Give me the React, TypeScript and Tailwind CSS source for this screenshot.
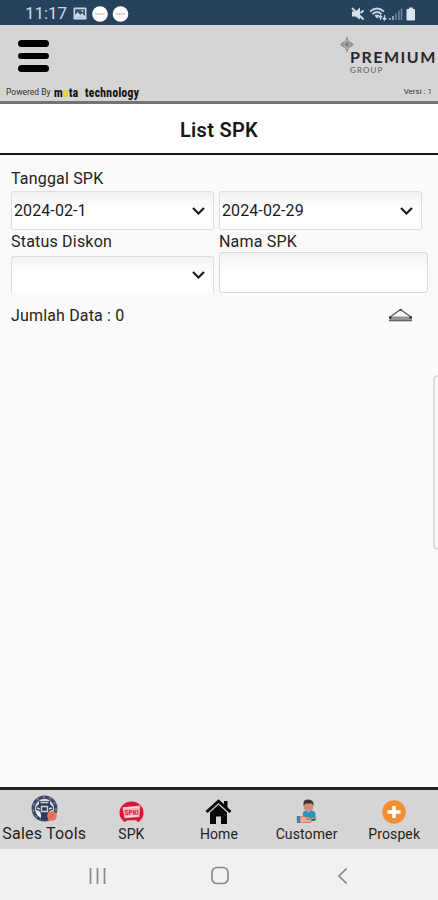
import React from "react";

function StatusBar() {
  return (
    <div className="flex h-[25px] shrink-0 items-center bg-[#26425d] pl-[25px] pr-[23px] pt-[2px] text-[#cfdce8]">
      <span className="w-[48px] text-[17px] leading-none tracking-[-0.1px]">11:17</span>
      <svg className="h-[13px] w-[14px]" viewBox="0 0 14 13">
        <rect x="0.5" y="0.5" width="13" height="12" rx="1.2" fill="#c9d8e5" />
        <rect x="2" y="2.2" width="10" height="8.2" fill="#3d5771" />
        <path d="M2 10.4V8l2.5-3 2.7 3L9 6.3l3 2.7v1.4z" fill="#c9d8e5" />
        <circle cx="9.5" cy="4" r="0.9" fill="#c9d8e5" />
      </svg>
      <svg className="ml-[5px] h-4 w-[37px]" viewBox="0 0 37 16">
        {[8, 28.5].map((cx) => (
          <g key={cx}>
            <circle cx={cx} cy="8" r="7.8" fill="#fff" />
            <path d={`M${cx - 5} 8h10`} stroke="#a8a8a8" strokeWidth="1.2" strokeDasharray="2 .5" />
          </g>
        ))}
      </svg>
      <svg className="ml-auto h-[14px] w-[64px]" viewBox="0 0 64 14">
        <path d="M1 4.500h3.500l4.500-4v12L4.500 9.500H1z" fill="#d3e0eb" />
        <path d="M1 1l11.500 11.500M9.500 6l3-2.500" stroke="#d3e0eb" strokeWidth="1.800" fill="none" />
        <path d="M19 4.500q7-6 14 0M21.500 7q4.500-4 9 0" fill="none" stroke="#c4d5e3" strokeWidth="1.700" />
        <path d="M23.500 8.500q2.500-2 5 0L26 11.500z" fill="#c4d5e3" />
        <path d="M29.500 13V8.500M27.800 10.500l1.700-2 1.700 2M33.500 8v5M31.800 11l1.700 2 1.700-2" stroke="#c4d5e3" strokeWidth="1.200" fill="none" />
        <path d="M39 13v-2M42 13V9" stroke="#a9bfd0" strokeWidth="1.600" />
        <path d="M45 13V6.500M48 13V3.500M50.500 13V1.500" stroke="#6c879e" strokeWidth="1.500" />
        <path d="M55.500 3q0-1 1-1H58V.5h4V2h1.300q.7 0 .7 1v9.500q0 1-1 1h-6.500q-1 0-1-1z" fill="#d9e6f0" />
      </svg>
    </div>
  );
}

function BrandLogo() {
  return (
    <div className="flex h-[40px] w-[98px] items-start font-['Lato',sans-serif]">
      <svg className="h-[17px] w-[14px] shrink-0" viewBox="0 0 14 17">
        <path d="M7 0L9 5l2.500 1.300L14 8.500l-2.500 2.200L9 12l-2 5-2-5-2.500-1.300L0 8.500l2.500-2.200L5 5z" fill="#939192" />
        <path d="M7 4l3.200 4.500L7 13 3.800 8.500z" fill="none" stroke="#c0bebf" strokeWidth="0.800" />
        <path d="M7 6.500v4M5.500 8.500h3" stroke="#777576" strokeWidth="0.800" />
      </svg>
      <div className="-ml-[4px] flex flex-col whitespace-nowrap pt-[12px] leading-none">
        <span className="text-[16px] font-bold leading-[17px] tracking-[1.500px] text-[#292728]">PREMIUM</span>
        <span className="text-[8px] leading-[10px] tracking-[1.100px] text-[#5c5a5b]">GROUP</span>
      </div>
    </div>
  );
}

function Header() {
  return (
    <header className="flex h-[79px] shrink-0 flex-col border-b-[3px] border-[#747273] bg-[#d6d4d5]">
      <div className="flex h-[58px] items-start justify-between pl-[18px] pt-[11px]">
        <button aria-label="Menu" className="mt-[4px] flex flex-col gap-[6px]">
          <span className="h-[6.500px] w-[31px] rounded-full bg-black" />
          <span className="h-[6.500px] w-[31px] rounded-full bg-black" />
          <span className="h-[6.500px] w-[31px] rounded-full bg-black" />
        </button>
        <BrandLogo />
      </div>
      <div className="flex h-[18px] items-center pl-[6px] pr-[6px] text-[8px] leading-none text-[#353334]">
        <span className="w-[48px] whitespace-nowrap text-[8.500px]">Powered By</span>
        <div className="flex h-[12px] origin-center scale-y-[1.300] items-center whitespace-nowrap pt-px text-[10px] font-black leading-[12px] text-[#15110c]">
          <span className="w-[31px] tracking-[0.350px]">m<span className="text-[#f2cd13]">o</span>ta</span>
          <span className="tracking-[0.400px]">technology</span>
        </div>
        <span className="ml-auto">Versi : 1</span>
      </div>
    </header>
  );
}

function SelectBox({ value = "", className = "" }: { value?: string; className?: string }) {
  return (
    <div className={`flex w-[203px] items-center justify-between rounded-[3px] border border-[#dedede] bg-linear-to-b from-[#f3f3f3] to-white to-50% pl-[2px] pr-[8px] text-[16px] text-[#1b1b1b] ${className}`}>
      <span className="tracking-[0.100px]">{value}</span>
      <svg className="h-[8px] w-[13px]" viewBox="0 0 13 8">
        <path d="M1 1l5.500 5.500L12 1" fill="none" stroke="#191919" strokeWidth="2.100" />
      </svg>
    </div>
  );
}

function Filters() {
  return (
    <main className="flex h-[632px] shrink-0 flex-col bg-[#fafafa] pl-[11px] pt-[12px] text-[16px] leading-[24px] text-[#232323]">
      <span className="h-[24px] tracking-[0.180px]">Tanggal SPK</span>
      <div className="flex gap-[5px]">
        <SelectBox value="2024-02-1" className="h-[39px]" />
        <SelectBox value="2024-02-29" className="h-[39px]" />
      </div>
      <div className="flex h-[63px] gap-[5px]">
        <div className="w-[203px]">
          <div className="h-[26px] tracking-[0.200px]">Status Diskon</div>
          <SelectBox className="h-[37px] rounded-b-none border-b-0" />
        </div>
        <div>
          <div className="h-[22px] tracking-[0.200px]">Nama SPK</div>
          <div className="h-[41px] w-[209px] rounded-[3px] border border-[#dadada] bg-linear-to-b from-[#f3f3f3] to-white to-50%" />
        </div>
      </div>
      <div className="flex items-center justify-between pr-[25px] pt-[10px]">
        <span className="pt-px tracking-[0.160px]">Jumlah Data : 0</span>
        <svg className="mb-px h-[14px] w-[25px]" viewBox="0 0 25 14">
          <path d="M2 9L12.500 1.500 23 9" fill="none" stroke="#555" strokeWidth="1.200" />
          <path d="M2 8.500h21l1 4.500H1z" fill="#929292" />
          <path d="M1 12.800h23" stroke="#555" strokeWidth="1" />
          <path d="M1 8.500h2.500v2H1zM21.500 8.500H24v2h-2.500zM11.800 1h1.400v1.500h-1.400z" fill="#222" />
        </svg>
      </div>
      <div className="mt-[47px] h-[175px] w-[5px] self-end rounded-l-[5px] border-2 border-r-0 border-[#dcdcdc]" />
    </main>
  );
}

function WheelIcon() {
  return (
    <svg className="h-[27px] w-[27px]" viewBox="0 0 27 27">
      <circle cx="13.500" cy="13.500" r="11.300" fill="#d9dce2" stroke="#3c4764" strokeWidth="3.300" />
      <circle cx="13.500" cy="13.500" r="11.500" fill="none" stroke="#a3acbf" strokeWidth="1" strokeDasharray="2.500 4" />
      <path d="M8 6h11v3l3 3v3q-4 0-5 4v6h-7v-6q-1-4-5-4v-3l3-3z" fill="#303b58" />
      <path d="M9.500 7.500h8M10.500 11.500h6v5h-6zM6 13l3 1M21 13l-3 1" stroke="#c9d4e3" strokeWidth="1.400" fill="none" />
      <path d="M5 17l4 1 1 5q-4-2-5-6z" fill="#f0f1f3" />
      <circle cx="21" cy="21" r="4.800" fill="#ee7358" />
      <path d="M18.500 23.500l4-4" stroke="#cf6252" strokeWidth="1.500" />
    </svg>
  );
}

function SpkIcon() {
  return (
    <svg className="h-[23px] w-[25px]" viewBox="0 0 25 23">
      <path d="M3.800 20.500A12 11.300 0 1 1 21.200 20.500q-2.200 3-4-.2H8q-2 3-4.200.2z" fill="#db1634" />
      <path d="M3.500 7.200l17.800-1.700-1 11.500-14.800 1.300z" fill="#f3b1bc" />
      <path d="M5 8.200l14.500-1M6.500 16.700l12.500-1" stroke="#f8e8ea" strokeWidth="1" />
      <text x="5.500" y="14.600" fontSize="6.500" fontWeight="700" fontFamily="Roboto, sans-serif" fill="#db1634">SPK!</text>
    </svg>
  );
}

function HomeIcon() {
  return (
    <svg className="h-[25px] w-[27px]" viewBox="0 0 27 25">
      <path d="M1.500 13L13.500 2.200 25.500 13" fill="none" stroke="#080808" strokeWidth="3" />
      <path d="M19 2h3.500v7L19 6z" fill="#080808" />
      <path d="M5 13.500l8.500-7.700 8.500 7.700V25h-6v-7.500h-5V25H5z" fill="#080808" />
    </svg>
  );
}

function CustomerIcon() {
  return (
    <svg className="h-[25px] w-[22px]" viewBox="0 0 22 25">
      <path d="M8 4h9v6l-3 3h-3l-3-3z" fill="#c98d79" />
      <path d="M7.500 7V4q0-3.500 4.500-3.500T17.500 4v3L16 4.500H9.500z" fill="#3f3435" />
      <path d="M7 17v-3q0-2 2.500-2.500l3 1.500 3-1.500q4 .5 4 4v4H8z" fill="#2f93bd" />
      <path d="M10.500 11h4l-2 2.700z" fill="#dca18d" />
      <path d="M4 18q4-2 6 0h3q1.500 1 0 2h-3 4l4-2q2.500-.5 1.500 1.200L14 23.500H4z" fill="#e5ae92" stroke="#91655a" strokeWidth=".6" />
      <path d="M.8 17H4v7H.8z" fill="#328bae" />
      <path d="M14 21l4-1.500 2.500 1-3 1.700z" fill="#1d647f" />
    </svg>
  );
}

function ProspekIcon() {
  return (
    <svg className="h-[24px] w-[24px]" viewBox="0 0 24 24">
      <circle cx="12" cy="12" r="11.700" fill="#f58e32" />
      <path d="M12 6v12M5.500 12h13" stroke="#fff" strokeWidth="3.600" />
    </svg>
  );
}

function TabBar() {
  const tabs = [
    { label: "SPK", icon: <SpkIcon /> },
    { label: "Home", icon: <HomeIcon /> },
    { label: "Customer", icon: <CustomerIcon /> },
    { label: "Prospek", icon: <ProspekIcon /> },
  ];
  return (
    <nav className="grid h-[62px] shrink-0 grid-cols-5 border-t-[3px] border-[#242324] bg-[#d6d4d5] text-[#222]">
      <div className="flex flex-col items-center pl-px pt-[5px]">
        <WheelIcon />
        <span className="mt-[2px] whitespace-nowrap text-[16px] leading-[20px] tracking-[0.200px]">Sales Tools</span>
      </div>
      {tabs.map((tab) => (
        <div key={tab.label} className="flex flex-col items-center">
          <div className="flex h-[43px] items-center justify-center">{tab.icon}</div>
          <span className="-mt-[8px] text-[14px] leading-[18px] tracking-[0.120px]">{tab.label}</span>
        </div>
      ))}
    </nav>
  );
}

function SystemNav() {
  return (
    <footer className="flex h-[51px] shrink-0 items-center bg-[#f1f1f1] pl-[88px] pt-[2px]">
      <svg className="h-[18px] w-[18px]" viewBox="0 0 18 18">
        <path d="M2.500 1v16M9.500 1v16M16.500 1v16" stroke="#878787" strokeWidth="1.700" />
      </svg>
      <svg className="ml-[104px] h-[20px] w-[20px]" viewBox="0 0 20 20">
        <rect x="2" y="1.500" width="16" height="16" rx="5" fill="none" stroke="#888" strokeWidth="1.700" />
      </svg>
      <svg className="ml-[107px] h-[18px] w-[11px]" viewBox="0 0 11 18">
        <path d="M9.500 1.500L2 9l7.500 7.500" fill="none" stroke="#858585" strokeWidth="1.700" />
      </svg>
    </footer>
  );
}

export default function App() {
  return (
    <div className="flex h-[900px] w-[438px] flex-col overflow-hidden bg-[#fafafa] font-['Roboto',sans-serif]">
      <StatusBar />
      <Header />
      <h1 className="flex h-[51px] shrink-0 items-center justify-center border-b-2 border-[#171717] bg-white pt-[2px] text-[20px] font-semibold tracking-[0.300px] text-[#171717]">List SPK</h1>
      <Filters />
      <TabBar />
      <SystemNav />
    </div>
  );
}
